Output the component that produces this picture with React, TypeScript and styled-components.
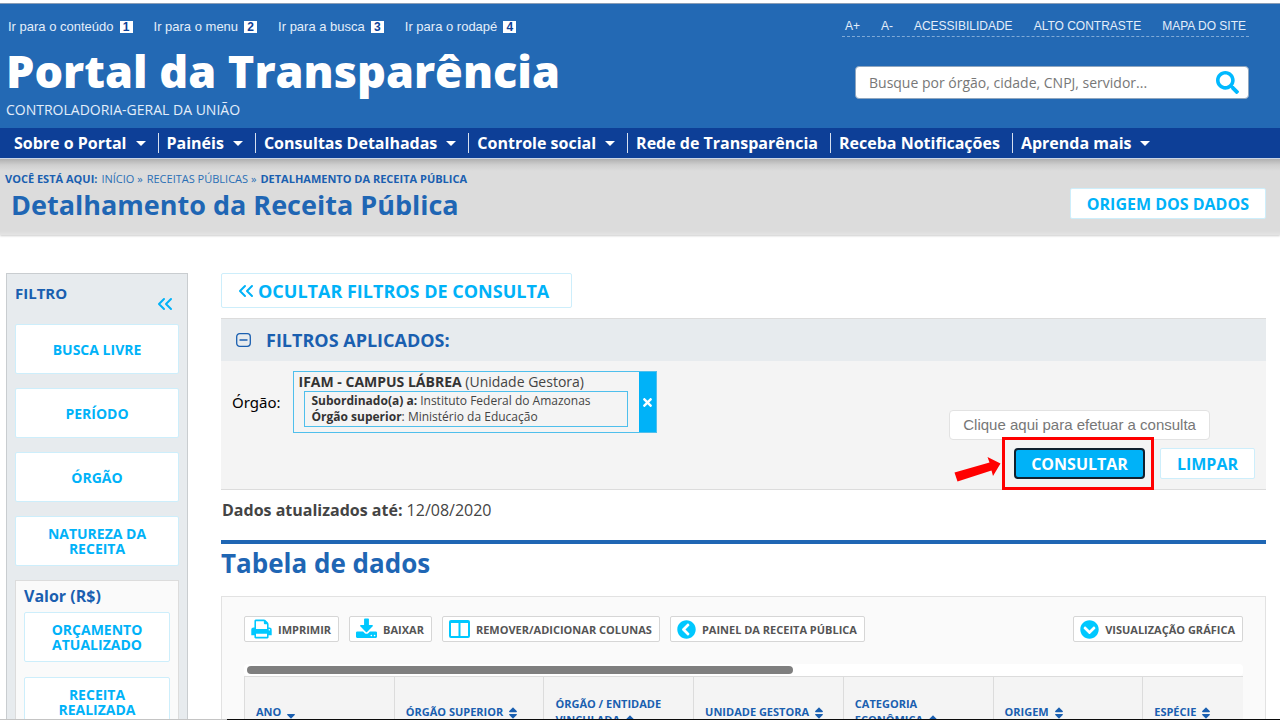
import React from 'react';
import styled, { createGlobalStyle, css } from 'styled-components';
import { ChevronsLeft } from 'lucide-react';
import { FaChevronCircleDown, FaChevronCircleLeft, FaSearch, FaSort, FaSortDown, FaTimes } from 'react-icons/fa';

const color = {
  header: '#2369b4',
  nav: '#0d3f97',
  heading: '#1f66b4',
  label: '#1a5fb0',
  cyan: '#00b2f8',
  icon: '#00c8ff',
  pale: '#cdeefb',
  panel: '#e7ebee',
  line: '#dcdcdc',
  text: '#444',
};

const GlobalStyle = createGlobalStyle`
  *, *::before, *::after { box-sizing: border-box; }
  body { margin: 0; background: #fff; font-family: 'Open Sans', sans-serif; color: ${color.text}; }
  h1, h2, p, ul, ol { margin: 0; padding: 0; }
  ul, ol { list-style: none; }
  a { color: inherit; text-decoration: none; }
  button { font-family: inherit; cursor: pointer; }
`;

const Page = styled.div`
  height: 100vh;
  overflow: hidden;
`;

const Header = styled.header`
  display: flex;
  justify-content: space-between;
  margin-top: 3px;
  padding: 11px 31px 8px 6px;
  border-top: 1px solid #8a9db5;
  background: ${color.header};
  color: #fff;
`;

const Brand = styled.div`
  display: flex;
  flex-direction: column;
`;

const SkipLinks = styled.ul`
  display: flex;
  gap: 21px;
  padding-left: 2px;
  font: 13px/24px 'Liberation Sans', sans-serif;
  color: #e4eefa;
`;

const SkipLink = styled.a`
  display: flex;
  align-items: center;
  gap: 6px;
`;

const SkipKey = styled.span`
  width: 13px;
  background: #fff;
  color: ${color.nav};
  font-size: 12px;
  font-weight: 700;
  line-height: 12px;
  text-align: center;
`;

const SiteName = styled.a`
  margin-top: 4px;
  font-size: 45px;
  font-weight: 800;
  line-height: 56px;
`;

const Agency = styled.p`
  font-size: 14px;
  font-weight: 400;
  line-height: 21px;
  color: #e4eefa;
`;

const HeaderSide = styled.div`
  display: flex;
  flex-direction: column;
  align-items: flex-end;
`;

const Tools = styled.ul`
  display: flex;
  gap: 21px;
  padding: 2px 3px 0;
  border-bottom: 1px dashed #7fa9d6;
  font: 12px/19px 'Liberation Sans', sans-serif;
  color: #e4eefa;
`;

const SearchForm = styled.form`
  display: flex;
  align-items: center;
  width: 394px;
  height: 33px;
  margin-top: 29px;
  border: 1px solid #8fa6bf;
  border-radius: 4px;
  background: #fff;
`;

const SearchInput = styled.input`
  flex: 1;
  min-width: 0;
  padding: 0 0 0 13px;
  border: 0;
  outline: 0;
  background: none;
  font: 14px 'Open Sans', sans-serif;
  &::placeholder { color: #777; opacity: 1; }
`;

const SearchButton = styled.button`
  display: flex;
  padding: 0 9px;
  border: 0;
  background: none;
  color: #00b9ff;
`;

const Nav = styled.nav`
  display: flex;
  align-items: center;
  height: 31px;
  padding-left: 6px;
  border-bottom: 1px solid #c9d5e8;
  background: ${color.nav};
  color: #fff;
`;

const NavItem = styled.a`
  display: flex;
  align-items: center;
  gap: 9px;
  padding: 0 12px 0 8px;
  font-size: 16px;
  font-weight: 700;
  line-height: 20px;
  & + & { border-left: 1px solid #d5dff0; }
`;

const Caret = styled.span`
  border: 5px solid transparent;
  border-top-color: #fff;
  border-bottom: 0;
`;

const Banner = styled.div`
  display: flex;
  justify-content: space-between;
  align-items: flex-start;
  height: 76px;
  padding: 12px 14px 0 5px;
  background: linear-gradient(#b0b0b0, #cfcfcf 6px, #dcdcdc 12px, #dcdcdc 72px, #e4e4e4);
  box-shadow: 0 1px 2px #ccc;
`;

const Crumbs = styled.ol`
  display: flex;
  gap: 4px;
  font-size: 11px;
  line-height: 16px;
  color: #2a6fb5;
`;

const Strong = styled.strong`
  color: ${color.label};
`;

const PageTitle = styled.h1`
  padding-left: 6px;
  font-size: 27px;
  line-height: 36px;
  color: ${color.heading};
`;

const Button = styled.button<{ $primary?: boolean; $size?: number }>`
  height: 31px;
  padding: 0 16px;
  border: 1px solid ${color.pale};
  border-radius: 2px;
  background: #fff;
  color: ${color.cyan};
  font-size: ${(p) => p.$size ?? 16}px;
  font-weight: 700;
  ${(p) =>
    p.$primary &&
    css`
      padding: 0 15px;
      border: 2px solid #10202e;
      border-radius: 4px;
      background: ${color.cyan};
      color: #fff;
    `}
`;

const OriginButton = styled(Button)`
  margin-top: 17px;
`;

const Layout = styled.div`
  display: grid;
  grid-template-columns: 182px minmax(0, 1fr);
  gap: 33px;
  padding: 38px 14px 0 6px;
`;

const Sidebar = styled.aside`
  padding: 9px 8px;
  border: 1px solid #c9cdd0;
  background: ${color.panel};
`;

const SideHead = styled.div`
  display: flex;
  justify-content: space-between;
  height: 41px;
`;

const SideTitle = styled.h2`
  font-size: 15px;
  line-height: 20px;
  color: ${color.label};
`;

const Collapse = styled.button`
  display: flex;
  align-self: flex-start;
  margin-top: 9px;
  padding: 0 2px;
  border: 0;
  background: none;
  color: ${color.cyan};
`;

const FilterList = styled.div`
  display: flex;
  flex-direction: column;
  gap: 14px;
`;

const FilterButton = styled.button`
  height: 50px;
  padding: 0 24px;
  border: 1px solid ${color.pale};
  border-radius: 2px;
  background: #fff;
  color: ${color.cyan};
  font-size: 14px;
  font-weight: 700;
  line-height: 15px;
`;

const ValueGroup = styled.section`
  display: flex;
  flex-direction: column;
  gap: 15px;
  padding: 5px 8px;
  border: 1px solid ${color.line};
  background: #fafafa;
`;

const ValueTitle = styled.h2`
  margin-bottom: -9px;
  font-size: 16px;
  line-height: 20px;
  color: ${color.label};
`;

const Main = styled.main`
  display: flex;
  flex-direction: column;
  align-items: stretch;
`;

const ToggleFilters = styled(Button)`
  display: flex;
  align-items: center;
  align-self: flex-start;
  height: 35px;
  padding: 0 22px 0 12px;
`;

const Applied = styled.section`
  margin-top: 10px;
  border-bottom: 1px solid ${color.line};
  background: #f4f4f4;
`;

const AppliedHead = styled.div`
  display: flex;
  align-items: center;
  gap: 15px;
  height: 43px;
  padding-left: 15px;
  border-top: 1px solid ${color.line};
  background: ${color.panel};
  color: ${color.label};
`;

const AppliedTitle = styled.h2`
  font-size: 18px;
  line-height: 24px;
`;

const AppliedRow = styled.div`
  display: flex;
  align-items: center;
  gap: 12px;
  padding: 10px 11px 0;
`;

const FieldName = styled.span`
  font: 15px 'Noto Sans', sans-serif;
  color: #000;
`;

const Tag = styled.div`
  display: flex;
  border: 1px solid #4fbfec;
  font-size: 14px;
  line-height: 19px;
`;

const TagText = styled.div`
  padding: 0 11px 5px 5px;
`;

const TagDetail = styled.div`
  width: 324px;
  margin-left: 5px;
  padding: 1px 7px;
  border: 1px solid #4fbfec;
  font-size: 12px;
  line-height: 16px;
`;

const TagStrong = styled.strong`
  color: #333;
`;

const RemoveTag = styled.button`
  display: flex;
  align-items: center;
  padding: 0 2px;
  border: 0;
  background: ${color.cyan};
  color: #fff;
`;

const Actions = styled.div`
  display: flex;
  justify-content: flex-end;
  gap: 15px;
  padding: 15px 11px 10px;
`;

const SubmitWrap = styled.div`
  position: relative;
`;

const Tooltip = styled.span`
  position: absolute;
  right: -65px;
  bottom: calc(100% + 8px);
  padding: 0 13px;
  border: 1px solid #e2e2e2;
  border-radius: 4px;
  background: #fff;
  color: #777;
  font: 15px/28px 'Liberation Sans', sans-serif;
  white-space: nowrap;
`;

const Highlight = styled.span`
  position: absolute;
  inset: -11px -9px -11px -12px;
  border: 3px solid #f00;
  pointer-events: none;
`;

const Pointer = styled.svg`
  position: absolute;
  right: calc(100% + 13px);
  top: 8px;
`;

const Updated = styled.p`
  padding: 8px 1px 0;
  font-size: 16px;
  line-height: 24px;
`;

const TableTitle = styled.h2`
  margin-top: 18px;
  border-top: 4px solid ${color.heading};
  font-size: 26px;
  line-height: 38px;
  color: ${color.heading};
`;

const DataPanel = styled.section`
  margin-top: 14px;
  padding: 19px 22px 0;
  border: 1px solid #e2e2e2;
  background: #fafafa;
`;

const Toolbar = styled.div`
  display: flex;
  gap: 10px;
`;

const ToolButton = styled.button`
  display: flex;
  align-items: center;
  gap: 6px;
  height: 26px;
  padding: 0 7px 0 6px;
  border: 1px solid #d6d6d6;
  border-radius: 2px;
  background: #fff;
  color: #555;
  font-size: 11px;
  font-weight: 700;
  white-space: nowrap;
  &:last-child { margin-left: auto; }
  svg { color: ${color.icon}; }
`;

const Track = styled.div`
  height: 12px;
  margin-top: 22px;
  padding: 2px 3px;
  border-radius: 4px;
  background: #fff;
`;

const Thumb = styled.div`
  width: 55%;
  height: 8px;
  border-radius: 4px;
  background: #7f7f7f;
`;

const Scroller = styled.div`
  overflow: hidden;
`;

const Table = styled.table`
  width: 105%;
  border-collapse: collapse;
  table-layout: fixed;
`;

const Th = styled.th`
  height: 71px;
  padding: 0 10px 0 11px;
  border: 1px solid ${color.line};
  background: #f4f4f4;
  color: ${color.label};
  font-size: 11px;
  line-height: 16px;
  text-align: left;
  svg { margin-left: 3px; font-size: 14px; vertical-align: middle; }
`;

const WindowEdge = styled.div`
  position: fixed;
  left: 0;
  right: 0;
  bottom: 0;
  height: 1px;
  background: linear-gradient(to right, #c4c4c4 227px, #0a0a0a 227px);
`;

const PrintIcon = () => (
  <svg width="21" height="22" viewBox="0 0 1664 1792" fill="currentColor" aria-hidden="true">
    <path d="M384 1536h896v-256H384zM384 896h896V512h-160q-40 0-68-28t-28-68V256H384zM1536 960q0-26-19-45t-45-19-45 19-19 45 19 45 45 19 45-19 19-45zM1664 960v416q0 13-9.500 22.500t-22.500 9.500h-224v160q0 40-28 68t-68 28H352q-40 0-68-28t-28-68v-160H32q-13 0-22.500-9.500T0 1376V960q0-79 56.500-135.500T192 768h64V224q0-40 28-68t68-28h672q40 0 88 20t76 48l152 152q28 28 48 76t20 88v256h64q79 0 135.500 56.500T1664 960z" />
  </svg>
);

const DownloadIcon = () => (
  <svg width="21" height="22" viewBox="0 0 1664 1664" fill="currentColor" aria-hidden="true">
    <path d="M1280 1344q0-26-19-45t-45-19-45 19-19 45 19 45 45 19 45-19 19-45zM1536 1344q0-26-19-45t-45-19-45 19-19 45 19 45 45 19 45-19 19-45zM1664 1120v320q0 40-28 68t-68 28H96q-40 0-68-28t-28-68v-320q0-40 28-68t68-28h465l135 136q58 56 136 56t136-56l136-136h464q40 0 68 28t28 68zM1339 551q17 41-14 70l-448 448q-18 19-45 19t-45-19L339 621q-31-29-14-70 17-39 59-39h256V64q0-26 19-45t45-19h256q26 0 45 19t19 45v448h256q42 0 59 39z" />
  </svg>
);

const ColumnsIcon = () => (
  <svg width="21" height="18" viewBox="0 0 21 18" fill="none" stroke="currentColor" strokeWidth="2" aria-hidden="true">
    <rect x="1" y="1" width="19" height="16" rx="1" />
    <path d="M1 2h19M10.500 2v15" />
  </svg>
);

const MinusBoxIcon = () => (
  <svg width="15" height="14" viewBox="0 0 15 14" fill="none" stroke="currentColor" aria-hidden="true">
    <rect x="0.700" y="0.700" width="13.600" height="12.600" rx="3" strokeWidth="1.300" />
    <path d="M3.500 7h8" strokeWidth="1.500" />
  </svg>
);

const skipLinks = ['Ir para o conteúdo', 'Ir para o menu', 'Ir para a busca', 'Ir para o rodapé'];
const tools = ['A+', 'A-', 'ACESSIBILIDADE', 'ALTO CONTRASTE', 'MAPA DO SITE'];
const navItems = [
  { label: 'Sobre o Portal', menu: true },
  { label: 'Painéis', menu: true },
  { label: 'Consultas Detalhadas', menu: true },
  { label: 'Controle social', menu: true },
  { label: 'Rede de Transparência', menu: false },
  { label: 'Receba Notificações', menu: false },
  { label: 'Aprenda mais', menu: true },
];
const filters = ['BUSCA LIVRE', 'PERÍODO', 'ÓRGÃO', 'NATUREZA DA RECEITA'];
const values = ['ORÇAMENTO ATUALIZADO', 'RECEITA REALIZADA'];
const columns = [
  'ANO',
  'ÓRGÃO SUPERIOR',
  'ÓRGÃO / ENTIDADE VINCULADA',
  'UNIDADE GESTORA',
  'CATEGORIA ECONÔMICA',
  'ORIGEM',
  'ESPÉCIE',
];

export default function App() {
  return (
    <Page>
      <GlobalStyle />
      <Header>
        <Brand>
          <SkipLinks>
            {skipLinks.map((label, i) => (
              <li key={label}>
                <SkipLink href="#">
                  {label} <SkipKey>{i + 1}</SkipKey>
                </SkipLink>
              </li>
            ))}
          </SkipLinks>
          <SiteName href="#">Portal da Transparência</SiteName>
          <Agency>CONTROLADORIA-GERAL DA UNIÃO</Agency>
        </Brand>
        <HeaderSide>
          <Tools>
            {tools.map((label) => (
              <li key={label}>
                <a href="#">{label}</a>
              </li>
            ))}
          </Tools>
          <SearchForm>
            <SearchInput type="text" aria-label="Busca" placeholder="Busque por órgão, cidade, CNPJ, servidor..." />
            <SearchButton type="button" aria-label="Buscar">
              <FaSearch size={23} />
            </SearchButton>
          </SearchForm>
        </HeaderSide>
      </Header>

      <Nav>
        {navItems.map((item) => (
          <NavItem href="#" key={item.label}>
            {item.label}
            {item.menu && <Caret />}
          </NavItem>
        ))}
      </Nav>

      <Banner>
        <div>
          <Crumbs>
            <li>
              <Strong>VOCÊ ESTÁ AQUI:</Strong>
            </li>
            <li>
              <a href="#">INÍCIO</a> »
            </li>
            <li>
              <a href="#">RECEITAS PÚBLICAS</a> »
            </li>
            <li>
              <Strong>DETALHAMENTO DA RECEITA PÚBLICA</Strong>
            </li>
          </Crumbs>
          <PageTitle>Detalhamento da Receita Pública</PageTitle>
        </div>
        <OriginButton>ORIGEM DOS DADOS</OriginButton>
      </Banner>

      <Layout>
        <Sidebar>
          <SideHead>
            <SideTitle>FILTRO</SideTitle>
            <Collapse aria-label="Recolher filtro">
              <ChevronsLeft size={24} />
            </Collapse>
          </SideHead>
          <FilterList>
            {filters.map((label) => (
              <FilterButton key={label}>{label}</FilterButton>
            ))}
            <ValueGroup>
              <ValueTitle>Valor (R$)</ValueTitle>
              {values.map((label) => (
                <FilterButton key={label}>{label}</FilterButton>
              ))}
            </ValueGroup>
          </FilterList>
        </Sidebar>

        <Main>
          <ToggleFilters $size={18}>
            <ChevronsLeft size={24} />
            OCULTAR FILTROS DE CONSULTA
          </ToggleFilters>

          <Applied>
            <AppliedHead>
              <MinusBoxIcon />
              <AppliedTitle>FILTROS APLICADOS:</AppliedTitle>
            </AppliedHead>
            <AppliedRow>
              <FieldName>Órgão:</FieldName>
              <Tag>
                <TagText>
                  <TagStrong>IFAM - CAMPUS LÁBREA</TagStrong> (Unidade Gestora)
                  <TagDetail>
                    <p>
                      <TagStrong>Subordinado(a) a:</TagStrong> Instituto Federal do Amazonas
                    </p>
                    <p>
                      <TagStrong>Órgão superior</TagStrong>: Ministério da Educação
                    </p>
                  </TagDetail>
                </TagText>
                <RemoveTag aria-label="Remover filtro">
                  <FaTimes size={13} />
                </RemoveTag>
              </Tag>
            </AppliedRow>
            <Actions>
              <SubmitWrap>
                <Tooltip role="tooltip">Clique aqui para efetuar a consulta</Tooltip>
                <Button $primary>CONSULTAR</Button>
                <Highlight />
                <Pointer width="47" height="27" viewBox="0 0 47 27" fill="#f00" aria-hidden="true">
                  <path d="M0.500 16.500 35.500 6.500 33.500 1 46.500 7.500 39 20 37.500 14.500 3.500 25.500Z" />
                </Pointer>
              </SubmitWrap>
              <Button>LIMPAR</Button>
            </Actions>
          </Applied>

          <Updated>
            <strong>Dados atualizados até:</strong> 12/08/2020
          </Updated>

          <TableTitle>Tabela de dados</TableTitle>
          <DataPanel>
            <Toolbar>
              <ToolButton>
                <PrintIcon />
                IMPRIMIR
              </ToolButton>
              <ToolButton>
                <DownloadIcon />
                BAIXAR
              </ToolButton>
              <ToolButton>
                <ColumnsIcon />
                REMOVER/ADICIONAR COLUNAS
              </ToolButton>
              <ToolButton>
                <FaChevronCircleLeft size={19} />
                PAINEL DA RECEITA PÚBLICA
              </ToolButton>
              <ToolButton>
                <FaChevronCircleDown size={19} />
                VISUALIZAÇÃO GRÁFICA
              </ToolButton>
            </Toolbar>
            <Track>
              <Thumb />
            </Track>
            <Scroller>
              <Table>
                <thead>
                  <tr>
                    {columns.map((label, i) => (
                      <Th key={label} scope="col">
                        {label}
                        {i === 0 ? <FaSortDown /> : <FaSort />}
                      </Th>
                    ))}
                  </tr>
                </thead>
              </Table>
            </Scroller>
          </DataPanel>
        </Main>
      </Layout>
      <WindowEdge />
    </Page>
  );
}
